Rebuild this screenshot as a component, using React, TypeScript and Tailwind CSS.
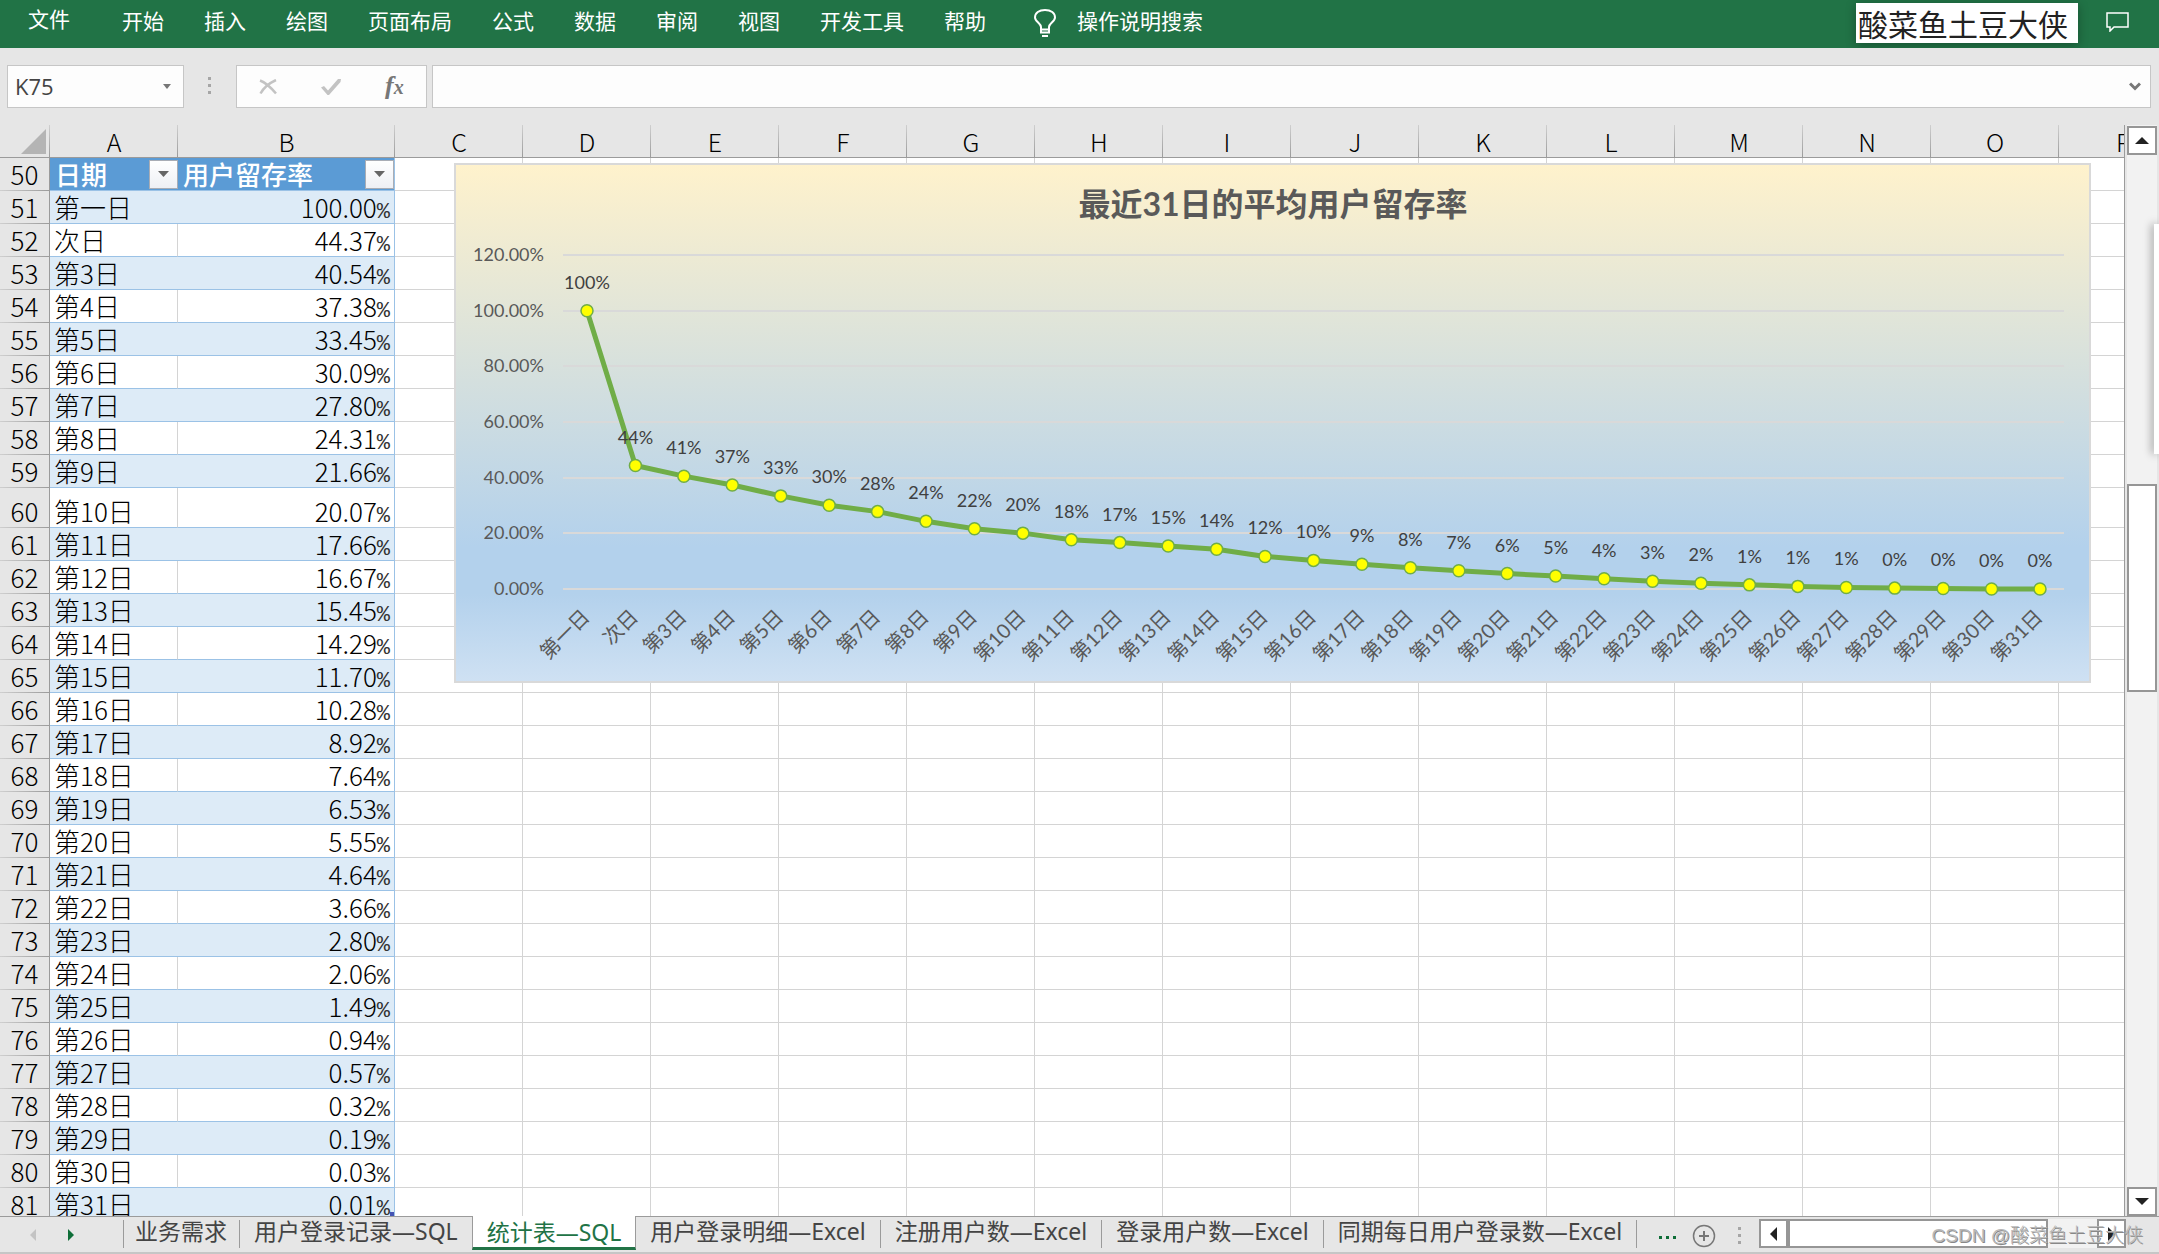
import type { ReactNode } from "react";

const MENUS = ["开始", "插入", "绘图", "页面布局", "公式", "数据", "审阅", "视图", "开发工具", "帮助"];

const COLUMNS = ["C", "D", "E", "F", "G", "H", "I", "J", "K", "L", "M", "N", "O"];

const RATES = [
  100, 44.37, 40.54, 37.38, 33.45, 30.09, 27.8, 24.31, 21.66, 20.07, 17.66, 16.67, 15.45, 14.29, 11.7, 10.28,
  8.92, 7.64, 6.53, 5.55, 4.64, 3.66, 2.8, 2.06, 1.49, 0.94, 0.57, 0.32, 0.19, 0.03, 0.01,
];

const DATA = RATES.map((rate, i) => ({
  day: i === 0 ? "第一日" : i === 1 ? "次日" : `第${i + 1}日`,
  rate,
}));

const TABS = [
  { name: "业务需求" },
  { name: "用户登录记录—SQL" },
  { name: "统计表—SQL", active: true },
  { name: "用户登录明细—Excel" },
  { name: "注册用户数—Excel" },
  { name: "登录用户数—Excel" },
  { name: "同期每日用户登录数—Excel" },
];

function Dots() {
  return (
    <div className="flex flex-col gap-1" aria-hidden="true">
      <span className="size-[3px] bg-[#a6a6a6]" />
      <span className="size-[3px] bg-[#a6a6a6]" />
      <span className="size-[3px] bg-[#a6a6a6]" />
    </div>
  );
}

function MenuBar() {
  return (
    <header className="flex h-12 shrink-0 items-start bg-[#217346] pl-7 pr-[29px] text-[21px] leading-10 text-white">
      <nav className="flex items-start gap-10">
        <button className="mr-3 leading-9">文件</button>
        {MENUS.map((m) => (
          <button key={m}>{m}</button>
        ))}
      </nav>
      <svg className="ml-[47px] mt-2 h-[30px] w-6" viewBox="0 0 24 30" fill="none" stroke="#fff" strokeWidth="2">
        <path d="M8 21.500V19C8 15.500 2 13.500 2 9.500C2 5 6 2 12 2S22 5 22 9.500C22 13.500 16 15.500 16 19V21.500Z" />
        <path d="M8 21v3.500h8V21M9 28h6" />
      </svg>
      <button className="ml-5">操作说明搜索</button>
      <div className="ml-auto mt-[3px] flex h-10 w-[222px] items-center bg-white pl-0.5 text-[30px] leading-10 whitespace-nowrap text-[#222] shadow-[0_2px_10px_rgba(0,0,0,0.3)]">
        酸菜鱼土豆大侠
      </div>
      <button aria-label="批注" className="ml-7 mt-3">
        <svg className="h-5 w-6" viewBox="0 0 24 20" fill="none" stroke="#fff" strokeWidth="1.500">
          <path d="M1 1H22V15H8L4 19V15H1Z" />
        </svg>
      </button>
    </header>
  );
}

function FormulaBar() {
  return (
    <div className="flex h-[77px] shrink-0 items-start bg-[#e6e6e6] pl-[7px] pr-2 pt-[17px]">
      <div className="flex h-[43px] w-[177px] items-center border border-[#c6c6c6] bg-[#fdfdfd] pl-[7px] pr-3">
        <input
          aria-label="名称框"
          defaultValue="K75"
          className="w-full min-w-0 bg-transparent font-['Open_Sans','Noto_Sans_CJK_SC',sans-serif] text-[22px] text-[#444] outline-none"
        />
        <button aria-label="展开名称框">
          <svg className="h-[5px] w-2" viewBox="0 0 8 5" fill="#777">
            <path d="M0 0H8L4 5Z" />
          </svg>
        </button>
      </div>
      <div className="ml-6 mt-3 w-7">
        <Dots />
      </div>
      <div className="flex h-[43px] w-[191px] items-center border border-[#c6c6c6] bg-[#fdfdfd]">
        <button aria-label="取消" className="ml-[22px]">
          <svg className="h-4 w-[18px]" viewBox="0 0 18 16" fill="none" stroke="#c3c3c3" strokeWidth="2.500">
            <path d="M1 1.500Q8 4 17 14.500M17 1Q6 6 1.500 14.500" />
          </svg>
        </button>
        <button aria-label="输入" className="ml-11">
          <svg className="h-[18px] w-5" viewBox="0 0 20 18" fill="#c3c3c3">
            <path d="M0 9.500L3 8L7 12.500L17 1H20L19.500 4L8 17H6.500Z" />
          </svg>
        </button>
        <button
          aria-label="插入函数"
          className="ml-11 font-['Liberation_Serif',serif] text-[26px] leading-6 font-bold text-[#777] italic"
        >
          f<span className="text-[20px]">x</span>
        </button>
      </div>
      <div className="ml-[5px] flex h-[43px] flex-1 items-center border border-[#c6c6c6] bg-[#fdfdfd] pr-[9px]">
        <input aria-label="编辑栏" className="min-w-0 flex-1 bg-transparent text-[21px] outline-none" />
        <button aria-label="展开编辑栏">
          <svg className="h-[9px] w-3" viewBox="0 0 12 9" fill="none" stroke="#777" strokeWidth="3">
            <path d="M1 1.500L6 6.500L11 1.500" />
          </svg>
        </button>
      </div>
    </div>
  );
}

function FilterButton({ label }: { label: string }) {
  return (
    <button
      aria-label={label}
      className="flex h-[29px] w-[29px] shrink-0 items-center justify-center border border-[#a9adb5] bg-linear-to-b from-white to-[#eef0f5]"
    >
      <svg className="h-[6px] w-[11px]" viewBox="0 0 11 6" fill="#666">
        <path d="M0 0H11L5.500 6Z" />
      </svg>
    </button>
  );
}

function RowHead({ n }: { n: number }) {
  return (
    <th
      scope="row"
      className="border-r border-r-[#9b9b9b] bg-[#e6e6e6] bg-[linear-gradient(to_right,#cfcfcf,#9b9b9b)] bg-[length:100%_1px] bg-bottom bg-no-repeat p-0 pb-px align-bottom font-light"
    >
      {n}
    </th>
  );
}

function EmptyCells() {
  return (
    <>
      {COLUMNS.map((c) => (
        <td key={c} className="border-r border-b border-[#d4d4d4] p-0" />
      ))}
      <td className="border-b border-[#d4d4d4] p-0" />
    </>
  );
}

function HeadCell({ children, last = false }: { children?: ReactNode; last?: boolean }) {
  return (
    <th
      scope="col"
      className={
        last
          ? "overflow-hidden border-b border-[#9b9b9b] p-0 pl-[57px] text-left font-light"
          : "border-b border-[#9b9b9b] bg-[linear-gradient(to_bottom,#cfcfcf,#9b9b9b)] bg-[length:1px_100%] bg-right bg-no-repeat p-0 font-light"
      }
    >
      {children}
    </th>
  );
}

function SheetTable() {
  return (
    <table className="w-full table-fixed border-separate border-spacing-0 bg-white text-[26px] leading-8 text-black">
      <colgroup>
        <col className="w-[50px]" />
        <col className="w-32" />
        <col className="w-[217px]" />
        {COLUMNS.map((c) => (
          <col key={c} className="w-32" />
        ))}
        <col />
      </colgroup>
      <thead className="bg-[#e6e6e6] text-[25px]">
        <tr className="h-[33px]">
          <HeadCell>
            <svg className="ml-[21px] h-[25px] w-[25px]" viewBox="0 0 25 25" fill="#b4b4b4">
              <path d="M25 0V25H0Z" />
            </svg>
          </HeadCell>
          <HeadCell>A</HeadCell>
          <HeadCell>B</HeadCell>
          {COLUMNS.map((c) => (
            <HeadCell key={c}>{c}</HeadCell>
          ))}
          <HeadCell last>P</HeadCell>
        </tr>
      </thead>
      <tbody>
        <tr className="h-[33px]">
          <RowHead n={50} />
          <td className="border-b border-[#9bc2e6] bg-[#5b9bd5] p-0 pl-[5px] font-medium text-white">
            <div className="flex items-center justify-between">
              <span>日期</span>
              <FilterButton label="筛选日期" />
            </div>
          </td>
          <td className="border-r border-b border-[#9bc2e6] bg-[#5b9bd5] p-0 pl-[5px] font-medium text-white">
            <div className="flex items-center justify-between">
              <span>用户留存率</span>
              <FilterButton label="筛选用户留存率" />
            </div>
          </td>
          <EmptyCells />
        </tr>
        {DATA.map((d, i) => (
          <tr key={d.day} className={i === 9 ? "h-10" : "h-[33px]"}>
            <RowHead n={51 + i} />
            <td
              className={
                i % 2 === 0
                  ? "border-b border-[#9bc2e6] bg-[#ddebf7] p-0 pl-1 align-bottom font-light"
                  : "border-r border-b border-r-[#d4d4d4] border-b-[#9bc2e6] p-0 pl-1 align-bottom font-light"
              }
            >
              {d.day}
            </td>
            <td
              className={
                i % 2 === 0
                  ? "relative border-r border-b border-[#9bc2e6] bg-[#ddebf7] p-0 pr-1 text-right align-bottom font-light"
                  : "border-r border-b border-[#9bc2e6] p-0 pr-1 text-right align-bottom font-light"
              }
            >
              {d.rate.toFixed(2)}
              <span className="font-['Liberation_Mono',monospace] text-[22px] leading-4 text-[#333]">%</span>
              {i === DATA.length - 1 && <span className="absolute right-0 bottom-0 h-2 w-1 bg-[#4454b4]" />}
            </td>
            <EmptyCells />
          </tr>
        ))}
      </tbody>
    </table>
  );
}

const px = (i: number) => 133 + (i * 1453) / 30;
const py = (v: number) => 426 - (v * 334) / 120;

function Chart() {
  return (
    <svg
      role="img"
      aria-label="最近31日的平均用户留存率"
      className="absolute top-[38px] left-[454px] h-[520px] w-[1637px] font-['Lato','Noto_Sans_CJK_SC',sans-serif]"
      viewBox="0 0 1637 520"
    >
      <defs>
        <linearGradient id="chart-fill" x1="0" y1="0" x2="0" y2="1">
          <stop offset="0" stopColor="#fff2cc" />
          <stop offset="0.740" stopColor="#b3d1ec" />
          <stop offset="0.830" stopColor="#b3d1ec" />
          <stop offset="1" stopColor="#cfe1f3" />
        </linearGradient>
      </defs>
      <rect x="1" y="1" width="1635" height="518" fill="url(#chart-fill)" stroke="#d9d9d9" strokeWidth="2" />
      <text x="819" y="53" textAnchor="middle" className="text-[32px] font-bold" fill="#595959">
        最近31日的平均用户留存率
      </text>
      {[0, 20, 40, 60, 80, 100, 120].map((v) => (
        <g key={v}>
          <path d={`M109 ${Math.round(py(v))}H1610`} stroke="#d9d9d9" strokeWidth="2" />
          <text x="90" y={Math.round(py(v)) + 6} textAnchor="end" className="text-[18px]" fill="#595959">
            {v.toFixed(2)}%
          </text>
        </g>
      ))}
      <polyline
        points={DATA.map((d, i) => `${px(i)},${py(d.rate)}`).join(" ")}
        fill="none"
        stroke="#70ad47"
        strokeWidth="5"
        strokeLinejoin="round"
      />
      {DATA.map((d, i) => (
        <g key={d.day}>
          <circle cx={px(i)} cy={py(d.rate)} r="6" fill="#ff0" stroke="#70ad47" strokeWidth="1.500" />
          <text x={px(i)} y={py(d.rate) - 22} textAnchor="middle" className="text-[18px]" fill="#404040">
            {Math.round(d.rate)}%
          </text>
          <text
            transform={`translate(${px(i) + 4} 455) rotate(-45)`}
            textAnchor="end"
            className="text-[20px]"
            fill="#595959"
          >
            {d.day}
          </text>
        </g>
      ))}
    </svg>
  );
}

function VerticalScroll() {
  return (
    <div className="relative flex w-[34px] shrink-0 flex-col bg-[#e6e6e6] pl-0.5">
      <div className="flex w-[30px] flex-1 flex-col bg-[#f2f2f2]">
        <button
          aria-label="向上滚动"
          className="mt-px flex h-[29px] items-center justify-center border-2 border-[#969696] bg-white"
        >
          <svg className="h-[7px] w-[14px]" viewBox="0 0 14 7" fill="#222">
            <path d="M7 0L14 7H0Z" />
          </svg>
        </button>
        <div className="mt-[329px] h-[208px] border-2 border-[#969696] bg-white" />
        <button
          aria-label="向下滚动"
          className="mt-auto flex h-[29px] items-center justify-center border-2 border-[#969696] bg-white"
        >
          <svg className="h-[7px] w-[14px]" viewBox="0 0 14 7" fill="#222">
            <path d="M0 0H14L7 7Z" />
          </svg>
        </button>
      </div>
      <div className="absolute top-[99px] right-0 h-[230px] w-[5px] bg-white shadow-[-2px_0_8px_rgba(0,0,0,0.4)]" />
    </div>
  );
}

function SheetTabs() {
  return (
    <footer className="relative flex h-[38px] shrink-0 items-start border-b-2 border-[#c6c6c6] bg-[#e6e6e6]">
      <div className="flex h-9 w-[123px] shrink-0 items-center gap-8 border-t border-[#9b9b9b] pl-[30px]">
        <button aria-label="上一个工作表">
          <svg className="h-3 w-[6px]" viewBox="0 0 6 12" fill="#c3c3c3">
            <path d="M6 0V12L0 6Z" />
          </svg>
        </button>
        <button aria-label="下一个工作表">
          <svg className="h-3 w-[6px]" viewBox="0 0 6 12" fill="#0e6e38">
            <path d="M0 0V12L6 6Z" />
          </svg>
        </button>
      </div>
      <div className="flex h-9 shrink-0 font-['Noto_Sans','Noto_Sans_CJK_SC',sans-serif] text-[23px] leading-7 whitespace-nowrap">
        {TABS.map((t, i) =>
          t.active ? (
            <button
              key={t.name}
              className="h-[34px] border-x border-b-3 border-x-[#9b9b9b] border-b-[#217346] bg-white px-3.5 text-[#217346]"
            >
              {t.name}
            </button>
          ) : (
            <div key={t.name} className="flex items-start border-t border-[#9b9b9b] pt-[3px]">
              {i === 0 && <span className="h-7 w-px bg-[#9b9b9b]" />}
              <button className={i === 0 ? "-mt-[3px] pr-3 pl-[11px] text-[#444]" : "-mt-[3px] px-3.5 text-[#444]"}>
                {t.name}
              </button>
              {i !== 1 && <span className="h-7 w-px bg-[#9b9b9b]" />}
            </div>
          ),
        )}
      </div>
      <div className="flex h-9 flex-1 items-start border-t border-[#9b9b9b]">
        <button aria-label="更多工作表" className="mt-[19px] ml-[22px] flex gap-1">
          <span className="size-[3px] bg-[#0e6e38]" />
          <span className="size-[3px] bg-[#0e6e38]" />
          <span className="size-[3px] bg-[#0e6e38]" />
        </button>
        <button aria-label="新工作表" className="mt-[7px] ml-4">
          <svg className="size-6" viewBox="0 0 24 24" fill="none" stroke="#777" strokeWidth="1.500">
            <circle cx="12" cy="12" r="10.500" />
            <path d="M12 7V17M7 12H17" strokeWidth="2" />
          </svg>
        </button>
        <div className="mt-[10px] ml-[22px]">
          <Dots />
        </div>
        <div className="mt-0.5 mr-[33px] ml-auto flex h-[29px] w-[367px] bg-[#f2f2f2]">
          <button
            aria-label="向左滚动"
            className="flex w-[29px] items-center justify-center border-2 border-[#969696] bg-white"
          >
            <svg className="h-[14px] w-[7px]" viewBox="0 0 7 14" fill="#222">
              <path d="M7 0V14L0 7Z" />
            </svg>
          </button>
          <div className="w-[260px] border-2 border-[#969696] bg-white" />
          <button
            aria-label="向右滚动"
            className="ml-auto flex w-[29px] items-center justify-center border-2 border-[#969696] bg-white"
          >
            <svg className="h-[14px] w-[7px]" viewBox="0 0 7 14" fill="#222">
              <path d="M0 0V14L7 7Z" />
            </svg>
          </button>
        </div>
      </div>
      <div className="absolute right-4 bottom-0 font-['Liberation_Sans','Noto_Sans_CJK_SC',sans-serif] text-[19px] leading-8 font-light whitespace-nowrap text-[#b8b8b8] [text-shadow:1px_1px_0_#888]">
        CSDN @酸菜鱼土豆大侠
      </div>
    </footer>
  );
}

export default function App() {
  return (
    <div className="flex h-screen w-full flex-col overflow-hidden bg-[#e6e6e6] font-['Noto_Sans_CJK_SC',sans-serif]">
      <MenuBar />
      <FormulaBar />
      <main className="flex min-h-0 flex-1">
        <div className="relative min-w-0 flex-1 overflow-hidden border-r border-[#9b9b9b]">
          <SheetTable />
          <Chart />
        </div>
        <VerticalScroll />
      </main>
      <SheetTabs />
    </div>
  );
}
